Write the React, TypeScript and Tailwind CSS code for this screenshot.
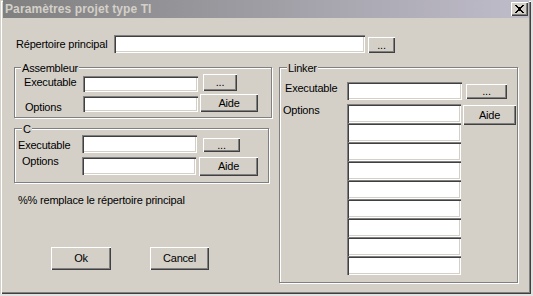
import React from "react";

const sunken =
  "bg-white shadow-[inset_1px_1px_0_#808080,inset_2px_2px_0_#404040,inset_-1px_-1px_0_#ffffff,inset_-2px_-2px_0_#d4d0c8]";
const raised =
  "bg-[#d4d0c8] shadow-[inset_1px_1px_0_#ffffff,inset_-1px_-1px_0_#404040,inset_-2px_-2px_0_#808080] flex items-center justify-center leading-none";
const group =
  "relative border border-[#808080] shadow-[1px_1px_0_#ffffff,inset_1px_1px_0_#ffffff]";
const legend = "absolute top-[-7px] bg-[#d4d0c8] px-[1px] leading-[14px]";

function CloseGlyph() {
  return (
    <svg width="9" height="8" viewBox="0 0 9 8" shapeRendering="crispEdges">
      <g fill="#000">
        <rect x="0" y="0" width="2" height="1" />
        <rect x="7" y="0" width="2" height="1" />
        <rect x="1" y="1" width="2" height="1" />
        <rect x="6" y="1" width="2" height="1" />
        <rect x="2" y="2" width="5" height="1" />
        <rect x="3" y="3" width="3" height="1" />
        <rect x="3" y="4" width="3" height="1" />
        <rect x="2" y="5" width="5" height="1" />
        <rect x="1" y="6" width="2" height="1" />
        <rect x="6" y="6" width="2" height="1" />
        <rect x="0" y="7" width="2" height="1" />
        <rect x="7" y="7" width="2" height="1" />
      </g>
    </svg>
  );
}

export default function App() {
  return (
    <div className="w-[533px] h-[296px] bg-[#e2e2e2] font-['Liberation_Sans',Arial,sans-serif] text-[11px] tracking-[-0.2px] text-black overflow-hidden">
      <div className="w-[531px] h-[294px] bg-[#d4d0c8] shadow-[inset_1px_1px_0_#d4d0c8,inset_2px_2px_0_#ffffff,inset_-1px_-1px_0_#404040,inset_-2px_-2px_0_#808080] flex flex-col">
        {/* Title bar */}
        <div className="ml-[3px] w-[526px] h-[18px] bg-linear-to-r from-[#808080] to-[#c0bdcb] flex items-center justify-between pl-[2px] pr-[1px]">
          <span className="font-bold text-[12px] tracking-[0.1px] text-[#d4d0c8] leading-none">
            Paramètres projet type TI
          </span>
          <div className={"w-[17px] h-[14px] " + raised}>
            <CloseGlyph />
          </div>
        </div>

        {/* Répertoire principal */}
        <div className="flex items-start mt-[17px] h-[18px]">
          <span className="ml-[16px] w-[98px] mt-[2px] leading-[14px]">Répertoire principal</span>
          <div className={"w-[251px] h-[18px] " + sunken} />
          <div className={"ml-[3px] mt-[2px] w-[27px] h-[16px] " + raised}>...</div>
        </div>

        {/* Main */}
        <div className="flex items-start mt-[14px]">
          {/* Left column */}
          <div className="ml-[14px] w-[258px] flex flex-col">
            {/* Assembleur */}
            <div className={"w-[258px] h-[51px] " + group}>
              <span className={"left-[6px] " + legend}>Assembleur</span>
              <div className="flex items-start mt-[6px] h-[17px]">
                <span className="ml-[9px] w-[59px] mt-[1px] leading-[14px]">Executable</span>
                <div className={"mt-[2px] w-[115px] h-[16px] " + sunken} />
                <div className={"ml-[5px] w-[34px] h-[17px] " + raised}>...</div>
              </div>
              <div className="flex items-start mt-[3px] h-[18px]">
                <span className="ml-[10px] w-[58px] mt-[6px] leading-[14px]">Options</span>
                <div className={"mt-[2px] w-[115px] h-[16px] " + sunken} />
                <div className={"ml-[2px] w-[58px] h-[18px] " + raised}>Aide</div>
              </div>
            </div>

            {/* C */}
            <div className={"mt-[10px] w-[255px] h-[55px] " + group}>
              <span className={"left-[7px] " + legend}>C</span>
              <div className="flex items-start mt-[6px] h-[18px]">
                <span className="ml-[3px] w-[64px] mt-[3px] leading-[14px]">Executable</span>
                <div className={"w-[115px] h-[18px] " + sunken} />
                <div className={"ml-[6px] mt-[3px] w-[37px] h-[14px] " + raised}>...</div>
              </div>
              <div className="flex items-start mt-[4px] h-[18px]">
                <span className="ml-[7px] w-[60px] -mt-[3px] leading-[14px]">Options</span>
                <div className={"w-[114px] h-[18px] " + sunken} />
                <div className={"ml-[3px] w-[59px] h-[19px] " + raised}>Aide</div>
              </div>
            </div>

            <span className="mt-[10px] ml-[4px] leading-[14px]">%% remplace le répertoire principal</span>

            <div className="flex mt-[40px]">
              <div className={"ml-[37px] w-[60px] h-[23px] " + raised}>Ok</div>
              <div className={"ml-[39px] w-[59px] h-[23px] " + raised}>Cancel</div>
            </div>
          </div>

          {/* Linker */}
          <div className={"ml-[7px] w-[239px] h-[216px] " + group}>
            <span className={"left-[7px] " + legend}>Linker</span>
            <div className="flex items-start mt-[14px] h-[18px]">
              <span className="ml-[5px] w-[62px] -mt-[1px] leading-[14px]">Executable</span>
              <div className={"w-[115px] h-[18px] " + sunken} />
              <div className={"ml-[4px] mt-[2px] w-[41px] h-[15px] " + raised}>...</div>
            </div>
            <div className="flex items-start mt-[4px]">
              <span className="ml-[3px] w-[64px] -mt-[1px] leading-[14px]">Options</span>
              <div className="flex flex-col">
                {Array.from({ length: 9 }).map((_, i) => (
                  <div key={i} className={"w-[114px] h-[19px] " + sunken} />
                ))}
              </div>
              <div className={"ml-[2px] mt-[1px] w-[53px] h-[20px] " + raised}>Aide</div>
            </div>
          </div>
        </div>
      </div>
    </div>
  );
}
